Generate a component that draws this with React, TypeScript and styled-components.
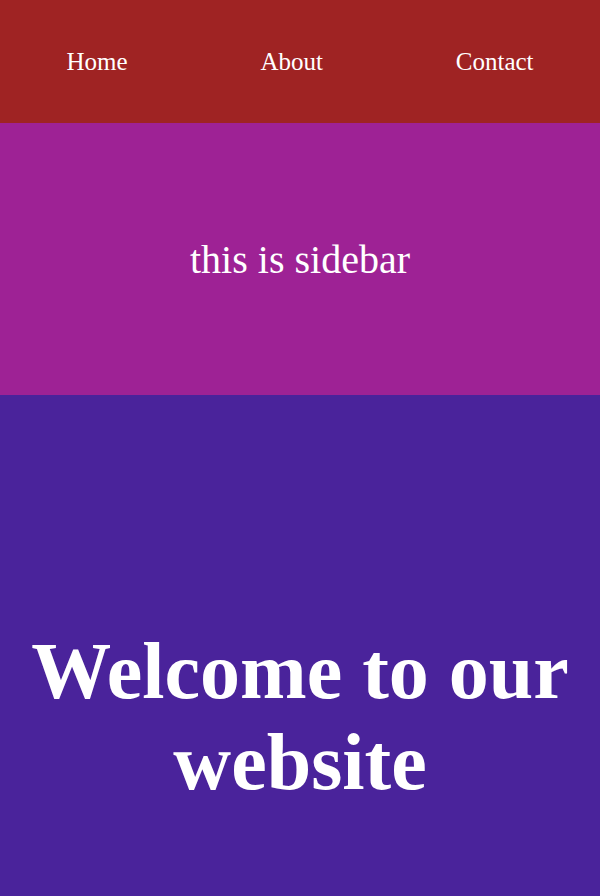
import React from "react";
import styled, { createGlobalStyle } from "styled-components";

const GlobalStyle = createGlobalStyle`
  html, body {
    margin: 0;
    padding: 0;
    background: #4a239b;
  }
  body {
    font-family: "Liberation Serif", "Times New Roman", serif;
    color: #ffffff;
  }
`;

const Page = styled.div`
  display: flex;
  flex-direction: column;
  min-height: 896px;
`;

const NavBar = styled.nav`
  height: 123px;
  background: #9f2323;
  display: flex;
  align-items: center;
  justify-content: space-around;
`;

const NavLink = styled.a`
  color: #ffffff;
  font-size: 25px;
  text-decoration: none;
  cursor: pointer;
`;

const Sidebar = styled.aside`
  height: 272px;
  background: #9e2295;
  display: flex;
  align-items: center;
  justify-content: center;
  font-size: 40px;
`;

const Main = styled.main`
  flex: 1;
  background: #4a239b;
  padding: 231px 16px 40px;
  text-align: center;
`;

const Heading = styled.h1`
  margin: 0;
  font-size: 80px;
  font-weight: 700;
  line-height: normal;
`;

export default function App() {
  return (
    <>
      <GlobalStyle />
      <Page>
        <NavBar>
          <NavLink>Home</NavLink>
          <NavLink>About</NavLink>
          <NavLink>Contact</NavLink>
        </NavBar>
        <Sidebar>this is sidebar</Sidebar>
        <Main>
          <Heading>Welcome to our website</Heading>
        </Main>
      </Page>
    </>
  );
}
